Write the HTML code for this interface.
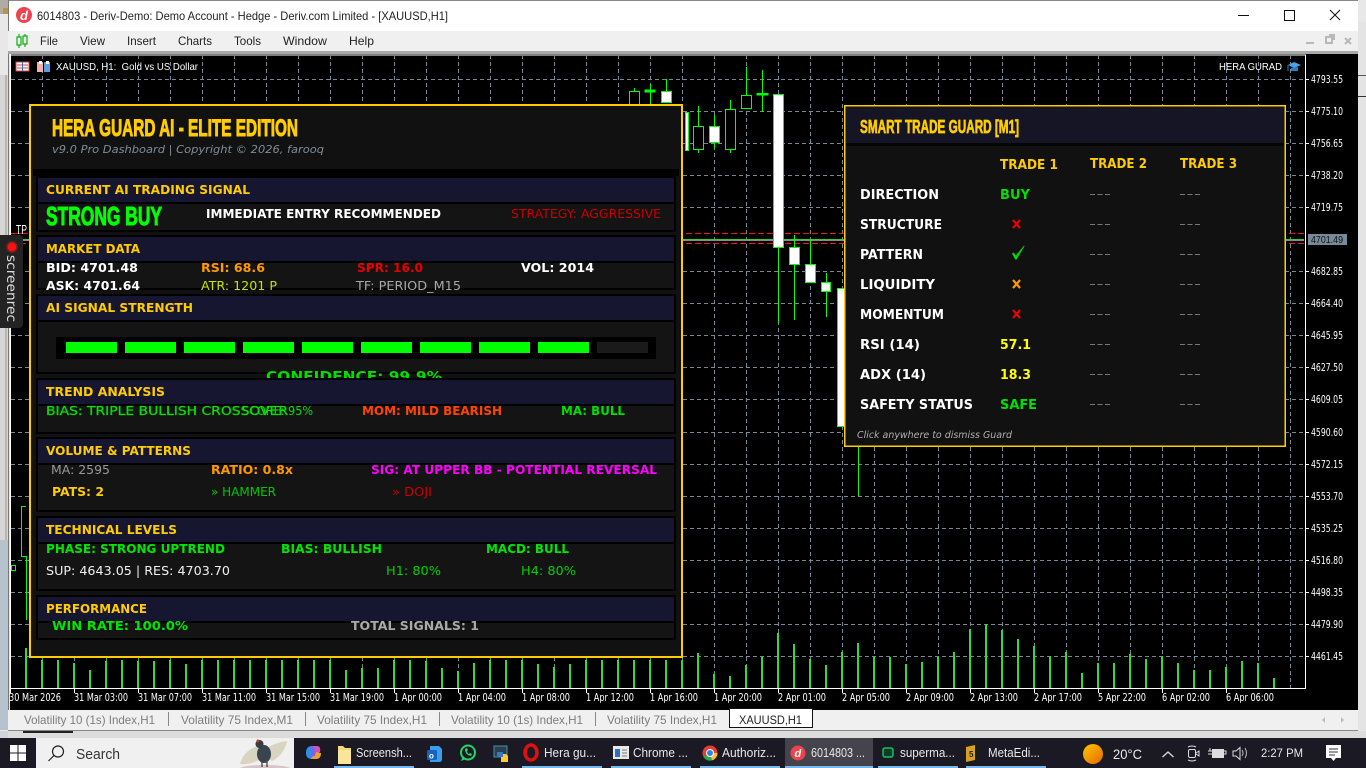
<!DOCTYPE html>
<html><head><meta charset="utf-8"><title>6014803 - Deriv-Demo</title>
<style>
html,body{margin:0;padding:0;background:#e8e8e8;width:1366px;height:768px;overflow:hidden}
svg{display:block;position:absolute;left:0;top:0}
text{white-space:pre;font-family:"DejaVu Sans",sans-serif}
.b{font:bold 12px "DejaVu Sans",sans-serif}
.t{font:bold 12.5px "DejaVu Sans",sans-serif;fill:#ffcc00}
.r{font:12px "DejaVu Sans",sans-serif}
.i{font:bold 24px "Liberation Sans",sans-serif}
.p{font:10.5px "Liberation Sans",sans-serif;fill:#fff}
.m{font:12px "Liberation Sans",sans-serif;fill:#222}
.tb{font:12px "Liberation Sans",sans-serif;fill:#7c7c7c}
.w{font:13px "Liberation Sans",sans-serif;fill:#e8e8e8}
.g{font:bold 13px "DejaVu Sans",sans-serif;fill:#fff}
.y{font:bold 13px "DejaVu Sans",sans-serif}
</style></head><body>
<svg width="1366" height="768" viewBox="0 0 1366 768" xmlns="http://www.w3.org/2000/svg">
<!-- backdrop -->
<rect width="1366" height="768" fill="#e8e8e8"/>
<rect x="0" y="0" width="8" height="14" fill="#b0aca4"/><rect x="3" y="8" width="5" height="6" fill="#b8934a"/>
<rect x="0" y="75" width="8" height="465" fill="#d6d6d6"/><rect x="5" y="75" width="2" height="465" fill="#bdb4a8"/>
<rect x="0" y="540" width="8" height="190" fill="#b6c2ce"/>
<rect x="1358" y="22" width="8" height="708" fill="#e4e4e4"/><rect x="1358" y="75" width="8" height="1" fill="#555"/><rect x="1358" y="96" width="8" height="1" fill="#333"/>
<!-- window -->
<rect x="8" y="0" width="1350" height="31" fill="#fff"/>
<rect x="8" y="0" width="1350" height="1" fill="#888"/>
<rect x="8" y="0" width="1" height="730" fill="#777"/>
<rect x="8" y="31" width="1350" height="20" fill="#f0f0f0"/>
<rect x="8" y="51" width="1350" height="3" fill="#a8a8a8"/>
<circle cx="24" cy="15" r="8" fill="#f0424c"/>
<text x="20" y="20" style="font:italic bold 13px 'Liberation Sans',sans-serif" fill="#fff">d</text>
<text class="m" x="37" y="20" textLength="411" lengthAdjust="spacingAndGlyphs">6014803 - Deriv-Demo: Demo Account - Hedge - Deriv.com Limited - [XAUUSD,H1]</text>
<path d="M1238 15.5h11" stroke="#111" fill="none"/><rect x="1284.5" y="10.5" width="10" height="10" fill="none" stroke="#111"/>
<path d="M1330 10l10 10M1340 10l-10 10" stroke="#111" fill="none"/>
<!-- menu -->
<g fill="none" stroke="#1db31d" stroke-width="1.3"><rect x="17" y="37" width="4" height="8"/><rect x="23" y="36" width="4" height="8"/><path d="M19 34v3M19 45v3M25 34v2M25 44v3"/></g>
<text class="m" x="40" y="45" textLength="18" lengthAdjust="spacingAndGlyphs">File</text>
<text class="m" x="80" y="45" textLength="25" lengthAdjust="spacingAndGlyphs">View</text>
<text class="m" x="127" y="45" textLength="29" lengthAdjust="spacingAndGlyphs">Insert</text>
<text class="m" x="178" y="45" textLength="34" lengthAdjust="spacingAndGlyphs">Charts</text>
<text class="m" x="234" y="45" textLength="27" lengthAdjust="spacingAndGlyphs">Tools</text>
<text class="m" x="283" y="45" textLength="44" lengthAdjust="spacingAndGlyphs">Window</text>
<text class="m" x="349" y="45" textLength="25" lengthAdjust="spacingAndGlyphs">Help</text>
<g fill="none" stroke="#b8b8b8" stroke-width="2"><path d="M1306 43h8M1326 37h6v6h-6zM1329 35h5v5M1345 38l6 6M1351 38l-6 6"/></g>
<!-- chart -->
<rect x="10" y="54" width="1348" height="656" fill="#000"/>
<path d="M10.5 54V688.5H1305.5V55H10" fill="none" stroke="#fff"/>
<g stroke="#778899" stroke-dasharray="4 3" fill="none">
<path d="M11 79.5H1304M11 111.5H1304M11 143.5H1304M11 175.5H1304M11 207.5H1304M11 271.5H1304M11 303.5H1304M11 335.5H1304M11 367.5H1304M11 399.5H1304M11 432.5H1304M11 464.5H1304M11 496.5H1304M11 528.5H1304M11 560.5H1304M11 592.5H1304M11 624.5H1304M11 656.5H1304"/>
<path d="M42.5 55V688M74.5 55V688M106.5 55V688M138.5 55V688M170.5 55V688M202.5 55V688M234.5 55V688M266.5 55V688M298.5 55V688M330.5 55V688M362.5 55V688M394.5 55V688M426.5 55V688M458.5 55V688M490.5 55V688M522.5 55V688M554.5 55V688M586.5 55V688M618.5 55V688M650.5 55V688M682.5 55V688M714.5 55V688M746.5 55V688M778.5 55V688M810.5 55V688M842.5 55V688M874.5 55V688M906.5 55V688M938.5 55V688M970.5 55V688M1002.5 55V688M1034.5 55V688M1066.5 55V688M1098.5 55V688M1130.5 55V688M1162.5 55V688M1194.5 55V688M1226.5 55V688M1258.5 55V688M1290.5 55V688"/>
</g>
<!-- level lines -->
<path d="M11 233.5H1304M11 243.5H1304" stroke="#ff1010" stroke-dasharray="6 3" fill="none"/>
<path d="M11 240.5H1304" stroke="#889" fill="none"/><path d="M11 239.5H1304" stroke="#30d030" fill="none"/>
<!-- volumes -->
<path stroke="#32dd32" stroke-width="2" fill="none" d="M26 688V648M42 688V660M58 688V660M74 688V663M90 688V670M106 688V661M122 688V660M138 688V661M154 688V661M170 688V660M186 688V664M202 688V660M218 688V660M234 688V660M250 688V660M266 688V660M282 688V660M298 688V660M314 688V660M330 688V660M346 688V670M362 688V668M378 688V668M394 688V660M410 688V660M426 688V661M442 688V668M458 688V671M474 688V663M490 688V660M506 688V660M522 688V660M538 688V664M554 688V667M570 688V664M586 688V660M602 688V660M618 688V660M634 688V660M650 688V660M666 688V660M682 688V660M698 688V653M714 688V674M730 688V676M746 688V665M762 688V657M778 688V633M794 688V644M810 688V659M826 688V665M842 688V652M858 688V643M874 688V657M890 688V657M906 688V664M922 688V662M938 688V657M954 688V652M970 688V629M986 688V624M1002 688V630M1018 688V639M1034 688V646M1050 688V656M1066 688V652M1082 688V673M1098 688V663M1114 688V663M1130 688V654M1146 688V659M1162 688V656M1178 688V663M1194 688V670M1210 688V670M1226 688V667M1242 688V661M1258 688V663M1274 688V678"/>
<!-- candles -->
<g stroke="#00ff00" fill="none">
<path d="M634.5 88V91M650.5 84V104M666.5 79V91M698.5 106V153M714.5 115V148M730.5 100V153M746.5 67V108M762.5 70V112M778.5 94V323M794.5 235V320M810.5 240V282M826.5 273V317M858.5 440V496"/>
<path d="M629.5 104V91.5H639.5V104" />
<rect x="645" y="90" width="10" height="2" fill="#00ff00"/>
<rect x="661.5" y="91.5" width="10" height="11" fill="#fff"/>
<rect x="685.5" y="112.5" width="3" height="38" fill="#fff"/>
<rect x="693.5" y="126.5" width="10" height="23" fill="#000"/>
<rect x="709.5" y="126.5" width="10" height="16" fill="#fff"/>
<rect x="725.5" y="109.5" width="10" height="40" fill="#000"/>
<rect x="741.5" y="95.5" width="10" height="13" fill="#000"/>
<rect x="757" y="93.500" width="11" height="1.500" fill="#00ff00"/>
<rect x="773.5" y="94.5" width="10" height="153" fill="#fff"/>
<rect x="789.5" y="247.5" width="10" height="17" fill="#fff"/>
<rect x="805.5" y="264.5" width="10" height="18" fill="#fff"/>
<rect x="821.5" y="282.5" width="9" height="9" fill="#fff"/>
<rect x="837.5" y="288.5" width="10" height="138" fill="#fff"/>
<path d="M21.5 506V556.5H26.5V620" /><path d="M21.5 506.5H26"/>
<rect x="11.5" y="565.5" width="4" height="5"/>
</g>
<path d="M15 233.5H28" stroke="#e01010"/>
<text x="16" y="234" class="p" style="font-size:13px" textLength="11" lengthAdjust="spacingAndGlyphs">TP</text>
<!-- chart header -->
<g><rect x="16" y="62" width="13" height="9" fill="#fff" stroke="#d04040"/><path d="M17 65h11M17 68h11" stroke="#d04040"/><path d="M22.5 62v9" stroke="#3a70c0"/>
<rect x="37" y="62" width="6" height="10" fill="#f2b0a8"/><rect x="44" y="62" width="6" height="10" fill="#5aa0e0"/><rect x="39" y="61" width="3" height="3" fill="#fff"/><rect x="46" y="61" width="3" height="3" fill="#fff"/></g>
<text class="p" x="56" y="70" textLength="142" lengthAdjust="spacingAndGlyphs">XAUUSD, H1:  Gold vs US Dollar</text>
<text class="p" x="1219" y="70" textLength="63" lengthAdjust="spacingAndGlyphs">HERA GURAD</text>
<path d="M1288 65l6-3 7 3-7 3z" fill="#4aa0e0"/><path d="M1291 68v3h7v-4" fill="#2a80c8"/><path d="M1288 65v6" stroke="#2a80c8"/>
<!-- price axis -->
<path stroke="#fff" fill="none" d="M1305 79.5h4M1305 111.5h4M1305 143.5h4M1305 175.5h4M1305 207.5h4M1305 271.5h4M1305 303.5h4M1305 335.5h4M1305 367.5h4M1305 399.5h4M1305 432.5h4M1305 464.5h4M1305 496.5h4M1305 528.5h4M1305 560.5h4M1305 592.5h4M1305 624.5h4M1305 656.5h4"/>
<g style="font:10.5px 'Liberation Sans',sans-serif" fill="#fff">
<text x="1311" y="83" textLength="32" lengthAdjust="spacingAndGlyphs">4793.55</text>
<text x="1311" y="115" textLength="32" lengthAdjust="spacingAndGlyphs">4775.10</text>
<text x="1311" y="147" textLength="32" lengthAdjust="spacingAndGlyphs">4756.65</text>
<text x="1311" y="179" textLength="32" lengthAdjust="spacingAndGlyphs">4738.20</text>
<text x="1311" y="211" textLength="32" lengthAdjust="spacingAndGlyphs">4719.75</text>
<text x="1311" y="275" textLength="32" lengthAdjust="spacingAndGlyphs">4682.85</text>
<text x="1311" y="307" textLength="32" lengthAdjust="spacingAndGlyphs">4664.40</text>
<text x="1311" y="339" textLength="32" lengthAdjust="spacingAndGlyphs">4645.95</text>
<text x="1311" y="371" textLength="32" lengthAdjust="spacingAndGlyphs">4627.50</text>
<text x="1311" y="403" textLength="32" lengthAdjust="spacingAndGlyphs">4609.05</text>
<text x="1311" y="436" textLength="32" lengthAdjust="spacingAndGlyphs">4590.60</text>
<text x="1311" y="468" textLength="32" lengthAdjust="spacingAndGlyphs">4572.15</text>
<text x="1311" y="500" textLength="32" lengthAdjust="spacingAndGlyphs">4553.70</text>
<text x="1311" y="532" textLength="32" lengthAdjust="spacingAndGlyphs">4535.25</text>
<text x="1311" y="564" textLength="32" lengthAdjust="spacingAndGlyphs">4516.80</text>
<text x="1311" y="596" textLength="32" lengthAdjust="spacingAndGlyphs">4498.35</text>
<text x="1311" y="628" textLength="32" lengthAdjust="spacingAndGlyphs">4479.90</text>
<text x="1311" y="660" textLength="32" lengthAdjust="spacingAndGlyphs">4461.45</text>
</g>
<rect x="1308" y="234" width="39" height="11" fill="#778899"/>
<text x="1311" y="243" style="font:10.5px 'Liberation Sans',sans-serif" fill="#111" textLength="32" lengthAdjust="spacingAndGlyphs">4701.49</text>
<!-- time axis -->
<path stroke="#fff" fill="none" d="M10.5 688v5M74.5 688v5M138.5 688v5M202.5 688v5M266.5 688v5M330.5 688v5M394.5 688v5M458.5 688v5M522.5 688v5M586.5 688v5M650.5 688v5M714.5 688v5M778.5 688v5M842.5 688v5M906.5 688v5M970.5 688v5M1034.5 688v5M1098.5 688v5M1162.5 688v5M1226.5 688v5"/>
<g style="font:10.5px 'Liberation Sans',sans-serif" fill="#fff">
<text x="9" y="701" textLength="52" lengthAdjust="spacingAndGlyphs">30 Mar 2026</text>
<text x="74" y="701" textLength="54" lengthAdjust="spacingAndGlyphs">31 Mar 03:00</text>
<text x="138" y="701" textLength="54" lengthAdjust="spacingAndGlyphs">31 Mar 07:00</text>
<text x="202" y="701" textLength="54" lengthAdjust="spacingAndGlyphs">31 Mar 11:00</text>
<text x="266" y="701" textLength="54" lengthAdjust="spacingAndGlyphs">31 Mar 15:00</text>
<text x="330" y="701" textLength="54" lengthAdjust="spacingAndGlyphs">31 Mar 19:00</text>
<text x="394" y="701" textLength="48" lengthAdjust="spacingAndGlyphs">1 Apr 00:00</text>
<text x="458" y="701" textLength="48" lengthAdjust="spacingAndGlyphs">1 Apr 04:00</text>
<text x="522" y="701" textLength="48" lengthAdjust="spacingAndGlyphs">1 Apr 08:00</text>
<text x="586" y="701" textLength="48" lengthAdjust="spacingAndGlyphs">1 Apr 12:00</text>
<text x="650" y="701" textLength="48" lengthAdjust="spacingAndGlyphs">1 Apr 16:00</text>
<text x="714" y="701" textLength="48" lengthAdjust="spacingAndGlyphs">1 Apr 20:00</text>
<text x="778" y="701" textLength="48" lengthAdjust="spacingAndGlyphs">2 Apr 01:00</text>
<text x="842" y="701" textLength="48" lengthAdjust="spacingAndGlyphs">2 Apr 05:00</text>
<text x="906" y="701" textLength="48" lengthAdjust="spacingAndGlyphs">2 Apr 09:00</text>
<text x="970" y="701" textLength="48" lengthAdjust="spacingAndGlyphs">2 Apr 13:00</text>
<text x="1034" y="701" textLength="48" lengthAdjust="spacingAndGlyphs">2 Apr 17:00</text>
<text x="1098" y="701" textLength="48" lengthAdjust="spacingAndGlyphs">5 Apr 22:00</text>
<text x="1162" y="701" textLength="48" lengthAdjust="spacingAndGlyphs">6 Apr 02:00</text>
<text x="1226" y="701" textLength="48" lengthAdjust="spacingAndGlyphs">6 Apr 06:00</text>
</g>
<!-- main panel -->
<rect x="30" y="105" width="652" height="552" fill="#111" stroke="#ffcc00" stroke-width="2"/>
<text class="i" x="52" y="136" fill="#ffcc00" stroke="#ffcc00" stroke-width="1" textLength="246" lengthAdjust="spacingAndGlyphs">HERA GUARD AI - ELITE EDITION</text>
<text x="52" y="153" style="font:italic 11px 'DejaVu Sans',sans-serif" fill="#7f8c9a" textLength="272" lengthAdjust="spacingAndGlyphs">v9.0 Pro Dashboard | Copyright © 2026, farooq</text>
<g fill="#000">
<rect x="33" y="169" width="646" height="7"/>
<rect x="36" y="176" width="640" height="56"/><rect x="36" y="235" width="640" height="55"/><rect x="36" y="294" width="640" height="80"/><rect x="36" y="378" width="640" height="56"/><rect x="36" y="437" width="640" height="75"/><rect x="36" y="516" width="640" height="75"/><rect x="36" y="595" width="640" height="45"/>
</g>
<g fill="#161630">
<rect x="38" y="178" width="636" height="24"/><rect x="38" y="237" width="636" height="24"/><rect x="38" y="296" width="636" height="24"/><rect x="38" y="380" width="636" height="24"/><rect x="38" y="439" width="636" height="24"/><rect x="38" y="518" width="636" height="24"/><rect x="38" y="597" width="636" height="24"/>
</g>
<g fill="#141414">
<rect x="38" y="204" width="636" height="26"/><rect x="38" y="263" width="636" height="25"/><rect x="38" y="322" width="636" height="50"/><rect x="38" y="406" width="636" height="26"/><rect x="38" y="465" width="636" height="45"/><rect x="38" y="544" width="636" height="45"/><rect x="38" y="623" width="636" height="15"/>
</g>
<text class="t" x="46" y="194" textLength="204" lengthAdjust="spacingAndGlyphs">CURRENT AI TRADING SIGNAL</text>
<text class="t" x="46" y="253" textLength="94" lengthAdjust="spacingAndGlyphs">MARKET DATA</text>
<text class="t" x="46" y="312" textLength="147" lengthAdjust="spacingAndGlyphs">AI SIGNAL STRENGTH</text>
<text class="t" x="46" y="396" textLength="119" lengthAdjust="spacingAndGlyphs">TREND ANALYSIS</text>
<text class="t" x="46" y="455" textLength="145" lengthAdjust="spacingAndGlyphs">VOLUME &amp; PATTERNS</text>
<text class="t" x="46" y="534" textLength="131" lengthAdjust="spacingAndGlyphs">TECHNICAL LEVELS</text>
<text class="t" x="46" y="613" textLength="101" lengthAdjust="spacingAndGlyphs">PERFORMANCE</text>
<text class="i" x="46" y="225" fill="#00ff00" stroke="#00ff00" stroke-width="1" style="font-size:26px" textLength="116" lengthAdjust="spacingAndGlyphs">STRONG BUY</text>
<text class="b" x="206" y="218" fill="#fff" textLength="235" lengthAdjust="spacingAndGlyphs">IMMEDIATE ENTRY RECOMMENDED</text>
<text class="r" x="511" y="218" fill="#c80000" textLength="150" lengthAdjust="spacingAndGlyphs">STRATEGY: AGGRESSIVE</text>
<text class="b" x="46" y="272" fill="#fff" textLength="92" lengthAdjust="spacingAndGlyphs">BID: 4701.48</text>
<text class="b" x="201" y="272" fill="#ff9900" textLength="64" lengthAdjust="spacingAndGlyphs">RSI: 68.6</text>
<text class="b" x="357" y="272" fill="#e80000" textLength="66" lengthAdjust="spacingAndGlyphs">SPR: 16.0</text>
<text class="b" x="521" y="272" fill="#fff" textLength="73" lengthAdjust="spacingAndGlyphs">VOL: 2014</text>
<text class="b" x="46" y="290" fill="#fff" textLength="94" lengthAdjust="spacingAndGlyphs">ASK: 4701.64</text>
<text class="r" x="201" y="290" fill="#c8e000" textLength="76" lengthAdjust="spacingAndGlyphs">ATR: 1201 P</text>
<text class="r" x="356" y="290" fill="#a8a8a8" textLength="105" lengthAdjust="spacingAndGlyphs">TF: PERIOD_M15</text>
<!-- meter -->
<rect x="56" y="337" width="600" height="22" fill="#000"/>
<g fill="#00ff00"><rect x="66" y="342" width="51" height="11"/><rect x="125" y="342" width="51" height="11"/><rect x="184" y="342" width="51" height="11"/><rect x="243" y="342" width="51" height="11"/><rect x="302" y="342" width="51" height="11"/><rect x="361" y="342" width="51" height="11"/><rect x="420" y="342" width="51" height="11"/><rect x="479" y="342" width="51" height="11"/><rect x="538" y="342" width="51" height="11"/></g>
<rect x="597" y="342" width="51" height="11" fill="#1a1a1a"/>
<clipPath id="cf"><rect x="200" y="360" width="300" height="18"/></clipPath>
<g clip-path="url(#cf)"><text x="266" y="381" style="font:bold 13px 'DejaVu Sans',sans-serif" fill="#00e000" textLength="176" lengthAdjust="spacingAndGlyphs">CONFIDENCE: 99.9%</text></g>
<!-- trend -->
<text class="r" x="46" y="415" fill="#00e000" stroke="#00e000" stroke-width=".3" textLength="242" lengthAdjust="spacingAndGlyphs">BIAS: TRIPLE BULLISH CROSSOVER</text>
<text class="r" x="242" y="415" fill="#00e000" textLength="71" lengthAdjust="spacingAndGlyphs">SCORE: 95%</text>
<text class="b" x="362" y="415" fill="#ff4400" textLength="140" lengthAdjust="spacingAndGlyphs">MOM: MILD BEARISH</text>
<text class="b" x="561" y="415" fill="#00e000" textLength="64" lengthAdjust="spacingAndGlyphs">MA: BULL</text>
<!-- volume -->
<text class="r" x="51" y="474" fill="#999" textLength="59" lengthAdjust="spacingAndGlyphs">MA: 2595</text>
<text class="b" x="211" y="474" fill="#ff9900" textLength="82" lengthAdjust="spacingAndGlyphs">RATIO: 0.8x</text>
<text class="b" x="371" y="474" fill="#ff00ff" textLength="286" lengthAdjust="spacingAndGlyphs">SIG: AT UPPER BB - POTENTIAL REVERSAL</text>
<text class="b" x="52" y="496" fill="#ffcc00" textLength="52" lengthAdjust="spacingAndGlyphs">PATS: 2</text>
<text class="r" x="211" y="496" fill="#00c800" textLength="65" lengthAdjust="spacingAndGlyphs">» HAMMER</text>
<text class="r" x="392" y="496" fill="#cc0000" textLength="40" lengthAdjust="spacingAndGlyphs">» DOJI</text>
<!-- technical -->
<text class="b" x="46" y="553" fill="#00e600" textLength="179" lengthAdjust="spacingAndGlyphs">PHASE: STRONG UPTREND</text>
<text class="b" x="281" y="553" fill="#00e600" textLength="101" lengthAdjust="spacingAndGlyphs">BIAS: BULLISH</text>
<text class="b" x="486" y="553" fill="#00e600" textLength="83" lengthAdjust="spacingAndGlyphs">MACD: BULL</text>
<text class="r" x="46" y="575" fill="#f0f0f0" textLength="184" lengthAdjust="spacingAndGlyphs">SUP: 4643.05 | RES: 4703.70</text>
<text class="r" x="386" y="575" fill="#00d000" textLength="55" lengthAdjust="spacingAndGlyphs">H1: 80%</text>
<text class="r" x="521" y="575" fill="#00d000" textLength="55" lengthAdjust="spacingAndGlyphs">H4: 80%</text>
<!-- performance -->
<text class="b" x="52" y="630" fill="#00e600" textLength="136" lengthAdjust="spacingAndGlyphs">WIN RATE: 100.0%</text>
<text class="b" x="351" y="630" fill="#aaa" textLength="128" lengthAdjust="spacingAndGlyphs">TOTAL SIGNALS: 1</text>
<!-- guard panel -->
<rect x="844.750" y="105.750" width="440.500" height="340.500" fill="#111" stroke="#ffcc00" stroke-width="1.500"/>
<rect x="846" y="107" width="438" height="36" fill="#151525"/><rect x="846" y="143" width="438" height="3" fill="#050505"/>
<text class="i" x="860" y="133" fill="#ffcc00" stroke="#ffcc00" stroke-width=".7" style="font-size:18px" textLength="159" lengthAdjust="spacingAndGlyphs">SMART TRADE GUARD [M1]</text>
<text class="y" x="1000" y="169" fill="#ffcc00" textLength="58" lengthAdjust="spacingAndGlyphs">TRADE 1</text>
<text class="y" x="1090" y="168" fill="#ffcc00" textLength="57" lengthAdjust="spacingAndGlyphs">TRADE 2</text>
<text class="y" x="1180" y="168" fill="#ffcc00" textLength="57" lengthAdjust="spacingAndGlyphs">TRADE 3</text>
<text class="g" x="860" y="199" textLength="79" lengthAdjust="spacingAndGlyphs">DIRECTION</text>
<text class="g" x="860" y="229" textLength="82" lengthAdjust="spacingAndGlyphs">STRUCTURE</text>
<text class="g" x="860" y="259" textLength="63" lengthAdjust="spacingAndGlyphs">PATTERN</text>
<text class="g" x="860" y="289" textLength="75" lengthAdjust="spacingAndGlyphs">LIQUIDITY</text>
<text class="g" x="860" y="319" textLength="84" lengthAdjust="spacingAndGlyphs">MOMENTUM</text>
<text class="g" x="860" y="349" textLength="60" lengthAdjust="spacingAndGlyphs">RSI (14)</text>
<text class="g" x="860" y="379" textLength="66" lengthAdjust="spacingAndGlyphs">ADX (14)</text>
<text class="g" x="860" y="409" textLength="113" lengthAdjust="spacingAndGlyphs">SAFETY STATUS</text>
<text class="y" x="1000" y="199" fill="#00e000" textLength="30" lengthAdjust="spacingAndGlyphs">BUY</text>
<path d="M1013 220l7 8M1020 220l-7 8" stroke="#ee0000" stroke-width="2.200" fill="none"/>
<path d="M1012 253.500l1.800-1 2 3.200 8-10 .8.300-8 13.500h-1.400z" fill="#00d800"/>
<path d="M1013 280l7 8M1020 280l-7 8" stroke="#ff9900" stroke-width="2.200" fill="none"/>
<path d="M1013 310l7 8M1020 310l-7 8" stroke="#ee0000" stroke-width="2.200" fill="none"/>
<text class="y" x="1000" y="349" fill="#ffff00" textLength="31" lengthAdjust="spacingAndGlyphs">57.1</text>
<text class="y" x="1000" y="379" fill="#ffff00" textLength="31" lengthAdjust="spacingAndGlyphs">18.3</text>
<text class="y" x="1000" y="409" fill="#00e000" textLength="37" lengthAdjust="spacingAndGlyphs">SAFE</text>
<path stroke="#777" stroke-dasharray="5 2.500" fill="none" d="M1090 194.500h20M1180 194.500h20M1090 224.500h20M1180 224.500h20M1090 254.500h20M1180 254.500h20M1090 284.500h20M1180 284.500h20M1090 314.500h20M1180 314.500h20M1090 344.500h20M1180 344.500h20M1090 374.500h20M1180 374.500h20M1090 404.500h20M1180 404.500h20"/>
<text x="857" y="438" style="font:italic 10px 'DejaVu Sans',sans-serif" fill="#b0b0b0" textLength="155" lengthAdjust="spacingAndGlyphs">Click anywhere to dismiss Guard</text>
<!-- screenrec -->
<rect x="-6" y="235" width="29" height="93" rx="4" fill="#232323"/>
<circle cx="12" cy="247" r="5" fill="#ff1010" stroke="#7a2020" stroke-width="1.500"/>
<text transform="translate(7,255) rotate(90)" style="font:13.500px 'DejaVu Sans',sans-serif" fill="#ddd" textLength="67" lengthAdjust="spacingAndGlyphs">screenrec</text>
<!-- tab bar -->
<rect x="8" y="710" width="1350" height="20" fill="#f0f0f0"/>
<rect x="8" y="730" width="1350" height="1" fill="#888"/>
<rect x="8" y="731" width="1358" height="7" fill="#dcdcdc"/><rect x="0" y="731" width="8" height="7" fill="#cfd4da"/>
<rect x="23" y="731" width="50" height="2" fill="#222"/>
<text class="tb" x="24" y="724" textLength="131" lengthAdjust="spacingAndGlyphs">Volatility 10 (1s) Index,H1</text>
<text class="tb" x="181" y="724" textLength="112" lengthAdjust="spacingAndGlyphs">Volatility 75 Index,M1</text>
<text class="tb" x="317" y="724" textLength="110" lengthAdjust="spacingAndGlyphs">Volatility 75 Index,H1</text>
<text class="tb" x="451" y="724" textLength="132" lengthAdjust="spacingAndGlyphs">Volatility 10 (1s) Index,H1</text>
<text class="tb" x="607" y="724" textLength="110" lengthAdjust="spacingAndGlyphs">Volatility 75 Index,H1</text>
<path d="M168.500 712v14M305.500 712v14M439.500 712v14M595.500 712v14" stroke="#888"/>
<rect x="729.500" y="708.500" width="83" height="19" fill="#fff" stroke="#111"/>
<text class="m" x="739" y="724" textLength="63" lengthAdjust="spacingAndGlyphs" fill="#111">XAUUSD,H1</text>
<path d="M1325 717l-3 3 3 3zM1341 717l3 3-3 3z" fill="#bbb"/>
<!-- taskbar -->
<rect x="0" y="738" width="1366" height="30" fill="#1b1a24"/>
<g fill="#fff"><rect x="10" y="745" width="7.500" height="7.500"/><rect x="18.500" y="745" width="7.500" height="7.500"/><rect x="10" y="753.500" width="7.500" height="7.500"/><rect x="18.500" y="753.500" width="7.500" height="7.500"/></g>
<rect x="36" y="738" width="258" height="30" fill="#f0f0f0"/>
<circle cx="58" cy="751.500" r="5.500" fill="none" stroke="#222" stroke-width="1.200"/><path d="M54 755.500l-5.500 5.500" stroke="#222" stroke-width="1.200"/>
<text x="76" y="759" style="font:14.500px 'Liberation Sans',sans-serif" fill="#333" textLength="44" lengthAdjust="spacingAndGlyphs">Search</text>
<!-- mascot -->
<ellipse cx="265" cy="769" rx="26" ry="4" fill="#d8c4c8"/>
<path d="M240 764q4-14 18-18l1 14q-10 5-19 4zM267 748q10-6 20-7-3 14-15 20l-5-3z" fill="#d8d4c0"/>
<ellipse cx="264" cy="754" rx="7" ry="9" fill="#3a444c"/><circle cx="259.500" cy="744" r="4" fill="#333d44"/><circle cx="258" cy="741" r="1.500" fill="#d03020"/>
<path d="M262 762v5M267 762v5" stroke="#333" stroke-width="1.200"/>
<!-- taskbar icons -->
<g transform="translate(305,745)"><path d="M1 8Q1 1 7 1L11 6 7 14Q1 14 1 8z" fill="#2f8fe8"/><path d="M7 1h5q4 0 3 6l-4 1z" fill="#d050c0"/><path d="M6 14h5q5 0 5-6l-5-1z" fill="#f0a030"/><path d="M7 1l4 5-1 5H6z" fill="#8060e0"/></g>
<path d="M338 746h5l2 2h6v16h-13z" fill="#f7d774"/><rect x="338" y="750" width="13" height="14" fill="#fbe59a"/>
<text class="w" x="356" y="757" textLength="56" lengthAdjust="spacingAndGlyphs">Screensh...</text>
<g><path d="M430 746h9l3 3v10q0 3-3 3h-9z" fill="#3a9ee8"/><rect x="427" y="750" width="10" height="10" rx="1.500" fill="#1464c0"/><text x="429" y="758.500" style="font:bold 8px 'Liberation Sans',sans-serif" fill="#fff">o</text></g>
<circle cx="468" cy="752.500" r="7" fill="none" stroke="#25d366" stroke-width="2"/><path d="M461 761l2-5 3 3z" fill="#25d366"/><path d="M465 749q0 6 6 7l1-2-2-1-1 1q-2-1-2-3l1-1-1-2z" fill="#25d366"/>
<rect x="494" y="746" width="13" height="11" fill="#2a3f50" stroke="#4a90a0"/><path d="M501 754h4q3 0 3 3v5h-7z" fill="#ffc93a"/><path d="M497 752h6v5h-6z" fill="#3a7ab8"/>
<ellipse cx="531" cy="752.500" rx="6" ry="7.500" fill="none" stroke="#e01010" stroke-width="3.500"/>
<text class="w" x="544" y="757" textLength="52" lengthAdjust="spacingAndGlyphs">Hera gu...</text>
<rect x="613" y="746" width="16" height="13" fill="#e8e8e8"/><rect x="615" y="749" width="5" height="8" fill="#2a70c0"/><path d="M622 750h5M622 753h5M622 756h5" stroke="#777"/>
<text class="w" x="633" y="757" textLength="55" lengthAdjust="spacingAndGlyphs">Chrome ...</text>
<g><circle cx="710" cy="753" r="7.500" fill="#e84030"/><path d="M710 753L703.500 757A7.500 7.500 0 0 0 714 759.500z" fill="#30a850"/><path d="M710 753h7.500A7.500 7.500 0 0 1 712 760.300z" fill="#fbc02d"/><circle cx="710" cy="753" r="3.500" fill="#3a7ee8" stroke="#fff"/></g>
<text class="w" x="722" y="757" textLength="54" lengthAdjust="spacingAndGlyphs">Authoriz...</text>
<rect x="785" y="738" width="88" height="30" fill="#45444c"/>
<circle cx="798" cy="753" r="7.500" fill="#f0424c"/><text x="794.500" y="757" style="font:italic bold 11px 'Liberation Sans',sans-serif" fill="#fff">d</text>
<text class="w" x="811" y="757" textLength="54" lengthAdjust="spacingAndGlyphs">6014803 ...</text>
<rect x="883" y="748" width="10" height="9" rx="2" fill="#0d3d28" stroke="#18c060" stroke-width="1.500"/>
<text class="w" x="900" y="757" textLength="55" lengthAdjust="spacingAndGlyphs">superma...</text>
<path d="M966 747l9-2v15l-9 2z" fill="#d8a020"/><text x="969" y="757" style="font:bold 8px 'Liberation Sans',sans-serif" fill="#2a2010">5</text>
<text class="w" x="988" y="757" textLength="52" lengthAdjust="spacingAndGlyphs">MetaEdi...</text>
<g fill="#76b9ed"><rect x="334" y="766" width="80" height="2"/><rect x="522" y="766" width="80" height="2"/><rect x="611" y="766" width="80" height="2"/><rect x="700" y="766" width="80" height="2"/><rect x="785" y="766" width="88" height="2"/><rect x="878" y="766" width="80" height="2"/><rect x="966" y="766" width="80" height="2"/></g>
<defs><linearGradient id="sun" x1="0" y1="0" x2="1" y2="1"><stop offset="0" stop-color="#ffc400"/><stop offset="1" stop-color="#e86a00"/></linearGradient></defs>
<circle cx="1093" cy="754" r="10" fill="url(#sun)"/>
<text x="1113" y="759" style="font:14px 'Liberation Sans',sans-serif" fill="#e8e8e8" textLength="29" lengthAdjust="spacingAndGlyphs">20°C</text>
<path d="M1162.500 757l5.500-5 5.500 5" fill="none" stroke="#ddd" stroke-width="1.300"/>
<g fill="none" stroke="#ddd"><rect x="1188.500" y="749.500" width="7" height="8" rx="1.500"/><path d="M1196 753l3-2v5l-3-2M1188 747q4-2 8 0M1188 760q4 2 8 0"/></g>
<rect x="1212" y="749" width="12" height="9" fill="#ddd"/><path d="M1210 748v3M1208 751h5v3h-5M1224 751h2v3h-2" fill="none" stroke="#ddd"/>
<path d="M1233 751h3l4-3.500v12l-4-3.500h-3z" fill="none" stroke="#ddd"/><path d="M1242 750q2 3 0 6M1245 748q3 5 0 10" fill="none" stroke="#bbb"/>
<text x="1261" y="757" style="font:12px 'Liberation Sans',sans-serif" fill="#e8e8e8" textLength="42" lengthAdjust="spacingAndGlyphs">2:27 PM</text>
<path d="M1326 745h15v13h-5l-2.500 3-2.500-3h-5z" fill="#fff"/><path d="M1329 749h9M1329 752h9M1329 755h6" stroke="#333"/>
</svg>
</body></html>
